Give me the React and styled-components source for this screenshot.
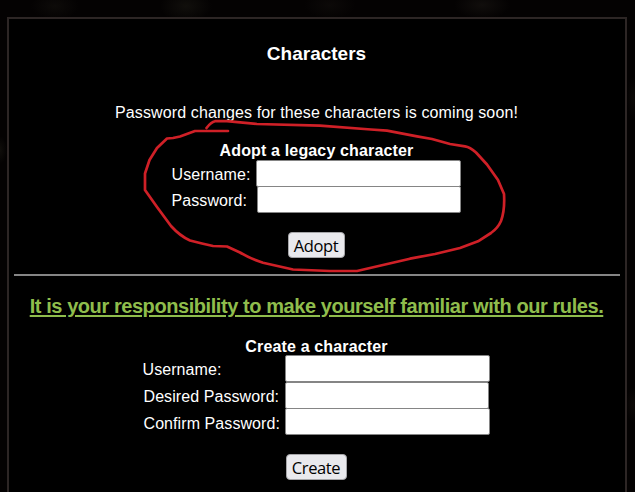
import React from 'react';
import styled, { createGlobalStyle } from 'styled-components';

const GlobalStyle = createGlobalStyle`
  * { box-sizing: border-box; }
  html, body { margin: 0; background: #040202; }
  body { overflow: hidden; font: 16px/18px "Liberation Sans", Arial, sans-serif; color: #fff; }
`;

const Page = styled.main`
  position: relative;
  width: 635px;
  height: 492px;
  padding: 17px 8px 0 7px;
  overflow: hidden;
  background:
    radial-gradient(ellipse 24px 14px at 55px 6px, #0d0b09, transparent),
    radial-gradient(ellipse 26px 16px at 186px 6px, #110f0c, transparent),
    radial-gradient(ellipse 26px 14px at 330px 5px, #0c0908, transparent),
    radial-gradient(ellipse 28px 14px at 482px 5px, #110e0c, transparent),
    radial-gradient(ellipse 7px 14px at 0 150px, #100e0b, transparent),
    radial-gradient(ellipse 6px 22px at 633px 98px, #0d0a08, transparent),
    radial-gradient(ellipse 7px 18px at 633px 405px, #0e0a08, transparent),
    #040202;
`;

const Panel = styled.section`
  height: 500px;
  padding: 0 7px 0 5px;
  border: 2px solid #2d2625;
  background: #000;
  display: flex;
  flex-direction: column;
  align-items: center;
`;

const Title = styled.h3`
  margin: 23px 0 0;
  padding-left: 1px;
  font-size: 19px;
  line-height: 24px;
`;

const Notice = styled.p`
  margin: 38px 0 0;
  padding-left: 1px;
  line-height: 18px;
  letter-spacing: 0.12px;
`;

const Form = styled.form`
  display: flex;
  flex-direction: column;
  align-items: center;
  margin-top: ${(p) => p.$top}px;
`;

const Caption = styled.h4`
  height: ${(p) => p.$height}px;
  margin: 0;
  padding-left: 1px;
  font-size: 16px;
  line-height: 18px;
  letter-spacing: 0.15px;
`;

const Fields = styled.div`
  display: grid;
  grid-template-columns: ${(p) => p.$label}px 205px;
  grid-template-rows: ${(p) => p.$rows};
`;

const Label = styled.label`
  padding-top: ${(p) => p.$drop}px;
  padding-left: ${(p) => p.$indent || 0}px;
  letter-spacing: 0.08px;
  white-space: nowrap;
`;

const Input = styled.input`
  width: ${(p) => p.$width || 205}px;
  height: 27px;
  margin: 0 0 0 ${(p) => p.$indent || 0}px;
  padding: 1px 4px;
  border: 1px solid #858585;
  border-radius: 2px;
  background: #fff;
  font: inherit;
`;

const Button = styled.button`
  width: ${(p) => p.$width}px;
  height: 26px;
  margin: 19px 0 0;
  padding: 1px 0 0;
  border: 1px solid #a5a5a8;
  border-radius: 4px;
  background: #e9e9ed;
  color: #000;
  font: 16.5px/23px "Open Sans", sans-serif;
  letter-spacing: -0.4px;
`;

const Divider = styled.hr`
  align-self: flex-start;
  width: 606px;
  height: 2px;
  flex: none;
  margin: 16px 0 0;
  border: 0;
  background: #858585;
`;

const RulesLink = styled.a`
  margin-top: 19px;
  padding-left: 1px;
  color: #8fbd4c;
  font-size: 20px;
  letter-spacing: -0.43px;
  font-weight: bold;
  line-height: 23px;
  text-decoration: underline;
  text-decoration-thickness: 2px;
  text-underline-offset: 2px;
  white-space: nowrap;
`;

const Marker = styled.svg`
  position: absolute;
  top: 0;
  left: 0;
  pointer-events: none;
`;

export default function App() {
  return (
    <Page>
      <GlobalStyle />
      <Panel>
        <Title>Characters</Title>
        <Notice>Password changes for these characters is coming soon!</Notice>
        <Form $top={20}>
          <Caption $height={18}>Adopt a legacy character</Caption>
          <Fields $label={84} $rows="26px 27px">
            <Label $drop={6} htmlFor="legacy-name">Username:</Label>
            <Input id="legacy-name" />
            <Label $drop={6} htmlFor="legacy-pass">Password:</Label>
            <Input id="legacy-pass" type="password" $width={204} $indent={1} />
          </Fields>
          <Button $width={57} type="button">Adopt</Button>
        </Form>
        <Divider />
        <RulesLink href="#rules">It is your responsibility to make yourself familiar with our rules.</RulesLink>
        <Form $top={20}>
          <Caption $height={17}>Create a character</Caption>
          <Fields $label={142} $rows="27px 26px 27px">
            <Label $drop={6} htmlFor="new-name">Username:</Label>
            <Input id="new-name" />
            <Label $drop={6} $indent={1} htmlFor="new-pass">Desired Password:</Label>
            <Input id="new-pass" type="password" $width={204} />
            <Label $drop={7} $indent={1} htmlFor="confirm-pass">Confirm Password:</Label>
            <Input id="confirm-pass" type="password" />
          </Fields>
          <Button $width={61} type="button">Create</Button>
        </Form>
      </Panel>
      <Marker width="635" height="492" viewBox="0 0 635 492" fill="none" aria-hidden="true">
        <path
          d="M228 131H195L180 136.5 173 138 167 138.5 157 148 149.5 160 145 173.500V190L157 207 171 226Q180 236 190 240.500L202 243.500 213 246 227 246.500 240 252.500Q251 259 263 262.700L293 269.500 330 271H357L410 258.700 435 254 460 248 478 241.300 491 233Q498 228 501 221 505 210 504 194L498 180 487 164.500 476 152.500Q470 147 465 146.300L450 144 432 139 417 136.300 387 130.700 371 129.500 320 125.700 257 124 227 121.200H215Q211 122 206.500 128"
          stroke="#cf2027"
          strokeWidth="2.7"
          strokeLinecap="round"
          strokeLinejoin="round"
        />
      </Marker>
    </Page>
  );
}
